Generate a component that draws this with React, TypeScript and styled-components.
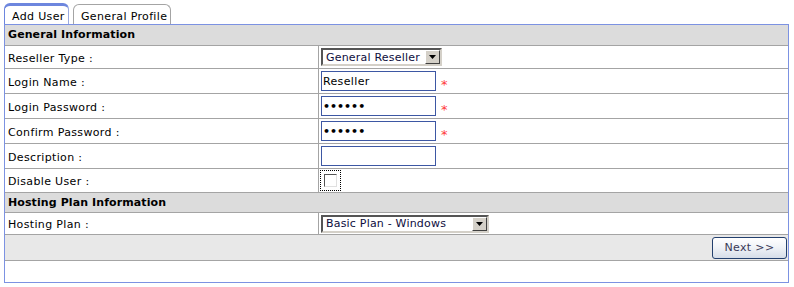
import styled, { createGlobalStyle, css } from 'styled-components';

const GlobalStyle = createGlobalStyle`
  body {
    margin: 0;
    background: #fff;
    font-family: "DejaVu Sans", Verdana, sans-serif;
    font-size: 11px;
    letter-spacing: 0.35px;
    color: #000;
  }
`;

const Page = styled.div`
  width: 794px;
  box-sizing: border-box;
  padding: 3px 5px 0 4px;
`;

const TabBar = styled.div`
  display: flex;
  align-items: flex-end;
  gap: 4px;
  height: 21px;
`;

const Tab = styled.div<{ active?: boolean }>`
  box-sizing: border-box;
  display: flex;
  align-items: center;
  white-space: nowrap;
  background: #fff;
  border-radius: 6px 6px 0 0;
  padding: 3px 0 0 7px;
  ${({ active }) =>
    active
      ? css`
          height: 21px;
          width: 65px;
          border: 1px solid #9aaae0;
          border-top: 3px solid #6d86de;
          border-left-color: #6d86de;
          border-bottom: none;
        `
      : css`
          height: 20px;
          width: 98px;
          border: 1px solid #a4a4a4;
          border-bottom: none;
        `}
`;

const Panel = styled.div`
  box-sizing: border-box;
  width: 785px;
  height: 259px;
  border: 1px solid #7c92e2;
  display: flex;
  flex-direction: column;
`;

const SectionHeader = styled.div<{ h: number }>`
  height: ${({ h }) => h}px;
  line-height: ${({ h }) => h}px;
  padding-left: 3px;
  background: #dcdcdc;
  border-bottom: 1px solid #a4a4a4;
  font-weight: bold;
  letter-spacing: 0.1px;
`;

const Row = styled.div<{ h: number }>`
  height: ${({ h }) => h}px;
  display: grid;
  grid-template-columns: 314px 1fr;
  border-bottom: 1px solid #a4a4a4;
`;

const Label = styled.div`
  display: flex;
  align-items: center;
  padding: 2px 0 0 3px;
  border-right: 1px solid #a4a4a4;
  white-space: nowrap;
`;

const Value = styled.div`
  display: flex;
  align-items: center;
  padding-left: 2px;
`;

const TextInput = styled.input`
  box-sizing: border-box;
  width: 115px;
  height: 20px;
  margin: 0;
  padding: 0 1px;
  border: 1px solid #3d57a3;
  font-family: "DejaVu Sans", Verdana, sans-serif;
  font-size: 11px;
  letter-spacing: 0.35px;
  color: #000;
  outline: none;
  &[type='password'] {
    font-weight: bold;
    letter-spacing: 0;
  }
`;

const Required = styled.span`
  color: #ff3b3b;
  font-size: 13px;
  margin: 6px 0 0 5px;
  line-height: 1;
`;

const SelectBox = styled.div<{ w: number }>`
  box-sizing: border-box;
  width: ${({ w }) => w}px;
  height: 18px;
  display: flex;
  align-items: center;
  justify-content: space-between;
  border: 2px solid;
  border-color: #555 #d4d0c8 #d4d0c8 #555;
  background: #fff;
  padding-left: 3px;
  color: #0d0d3d;
  font-size: 11px;
  letter-spacing: 0.2px;
  white-space: nowrap;
  overflow: hidden;
`;

const ArrowButton = styled.div`
  box-sizing: border-box;
  flex: none;
  width: 15px;
  height: 14px;
  display: flex;
  align-items: center;
  justify-content: center;
  background: #d4d0c8;
  border: 1px solid;
  border-color: #fff #404040 #404040 #fff;
`;

const CheckWrap = styled.div`
  box-sizing: border-box;
  width: 21px;
  height: 21px;
  border: 1px dotted #000;
  display: flex;
  align-items: center;
  justify-content: center;
  margin-left: -1px;
`;

const CheckBox = styled.div`
  box-sizing: border-box;
  width: 13px;
  height: 13px;
  border: 1px solid;
  border-color: #555 #e0e0e0 #e0e0e0 #555;
  background: #fff;
`;

const Footer = styled.div`
  height: 25px;
  display: flex;
  align-items: center;
  justify-content: flex-end;
  padding-right: 1px;
  background: #e8e8e8;
  border-bottom: 1px solid #a4a4a4;
`;

const NextButton = styled.button`
  box-sizing: border-box;
  width: 75px;
  height: 22px;
  margin: 0;
  border: 1px solid #23406e;
  border-radius: 3px;
  background: linear-gradient(#ffffff, #f1f4f8 45%, #d6dde8);
  color: #3a3a58;
  font-family: "DejaVu Sans", Verdana, sans-serif;
  font-size: 11px;
  letter-spacing: 0.35px;
  padding: 0;
`;

const Arrow = () => (
  <svg width="7" height="4" viewBox="0 0 7 4">
    <path d="M0 0h7L3.5 4z" fill="#000" />
  </svg>
);

const Select = ({ w, text }: { w: number; text: string }) => (
  <SelectBox w={w}>
    <span>{text}</span>
    <ArrowButton>
      <Arrow />
    </ArrowButton>
  </SelectBox>
);

const App = () => {
  return (
    <>
      <GlobalStyle />
      <Page>
        <TabBar>
          <Tab active>Add User</Tab>
          <Tab>General Profile</Tab>
        </TabBar>
        <Panel>
          <SectionHeader h={20}>General Information</SectionHeader>
          <Row h={22}>
            <Label>Reseller Type :</Label>
            <Value>
              <Select w={121} text="General Reseller" />
            </Value>
          </Row>
          <Row h={24}>
            <Label>Login Name :</Label>
            <Value>
              <TextInput defaultValue="Reseller" />
              <Required>*</Required>
            </Value>
          </Row>
          <Row h={24}>
            <Label>Login Password :</Label>
            <Value>
              <TextInput type="password" defaultValue="123456" />
              <Required>*</Required>
            </Value>
          </Row>
          <Row h={24}>
            <Label>Confirm Password :</Label>
            <Value>
              <TextInput type="password" defaultValue="123456" />
              <Required>*</Required>
            </Value>
          </Row>
          <Row h={24}>
            <Label>Description :</Label>
            <Value>
              <TextInput />
            </Value>
          </Row>
          <Row h={23}>
            <Label>Disable User :</Label>
            <Value>
              <CheckWrap>
                <CheckBox />
              </CheckWrap>
            </Value>
          </Row>
          <SectionHeader h={19}>Hosting Plan Information</SectionHeader>
          <Row h={21}>
            <Label>Hosting Plan :</Label>
            <Value>
              <Select w={168} text="Basic Plan - Windows" />
            </Value>
          </Row>
          <Footer>
            <NextButton>Next &gt;&gt;</NextButton>
          </Footer>
        </Panel>
      </Page>
    </>
  );
};

export default App;
